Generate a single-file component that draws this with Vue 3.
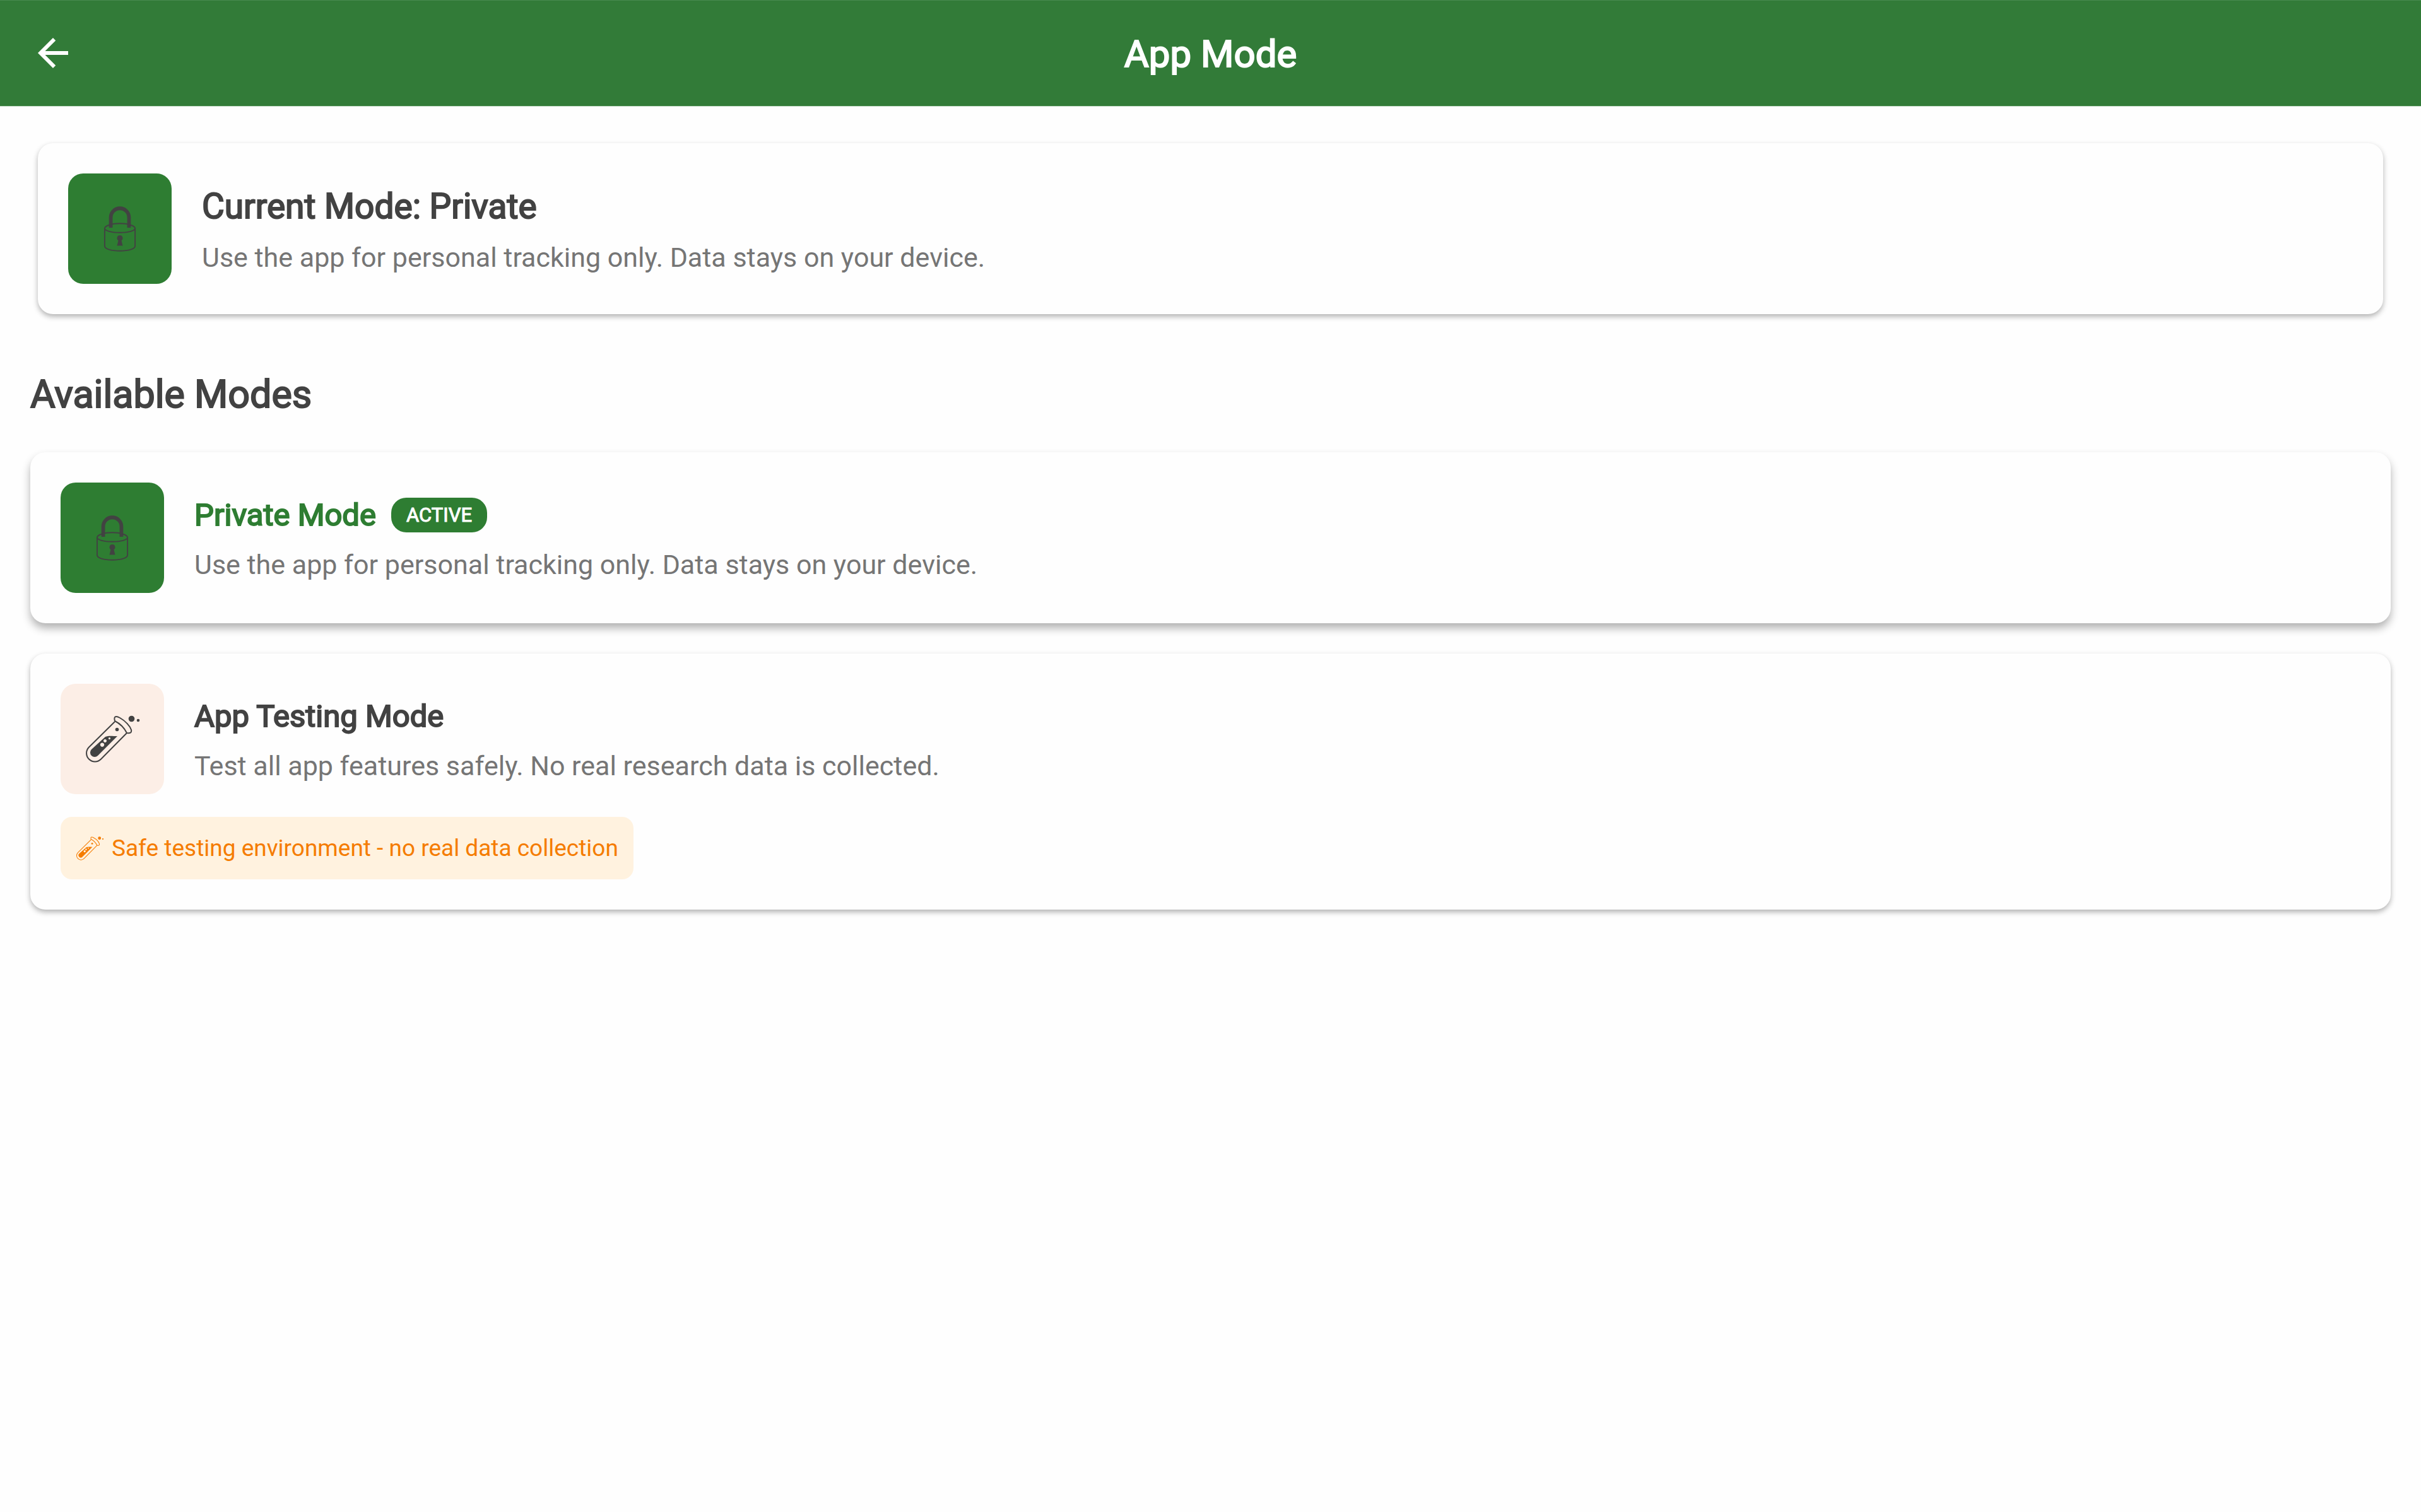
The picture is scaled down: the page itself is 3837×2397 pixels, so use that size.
<script setup>
const current = {
  title: 'Current Mode: Private',
  text: 'Use the app for personal tracking only. Data stays on your device.',
}

const modes = [
  {
    id: 'private',
    name: 'Private Mode',
    text: 'Use the app for personal tracking only. Data stays on your device.',
    icon: 'lock',
    active: true,
  },
  {
    id: 'testing',
    name: 'App Testing Mode',
    text: 'Test all app features safely. No real research data is collected.',
    icon: 'tube',
    active: false,
    note: 'Safe testing environment - no real data collection',
  },
]
</script>

<template>
  <svg class="symbols" aria-hidden="true">
    <symbol id="lock" viewBox="0 0 54 76">
      <g fill="none" stroke="currentColor">
        <path stroke-width="6" d="M12 36V19a15 15 0 0 1 30 0V36" />
        <path stroke-width="2" d="M2 37c0-4 11-8 25-8s25 4 25 8c0 4-11 7-25 7S2 41 2 37zM2 37V66c0 5 11 8 25 8s25-3 25-8V37" />
      </g>
      <path fill="currentColor" d="M27 48.500a4.700 4.700 0 0 1 2.600 8.600L31.700 65.500h-9.400L24.400 57.100A4.700 4.700 0 0 1 27 48.500z" />
    </symbol>
    <symbol id="tube" viewBox="0 0 87 75">
      <g fill="none" stroke="currentColor" stroke-width="2" stroke-linejoin="round">
        <path d="M47 10L6 50.500a13.300 13.300 0 0 0 19 19L66 28" />
        <path d="M47 9C45 2 48 0 55 4C64 9 71 17 73 23C74 28 71 28.500 66 28C62 20 55 13 47 9z" />
      </g>
      <circle cx="73.500" cy="5.500" r="4.800" fill="currentColor" />
      <circle cx="84" cy="8" r="2.300" fill="currentColor" />
      <circle cx="50.500" cy="22.500" r="2.800" fill="currentColor" />
      <path fill="currentColor" fill-rule="evenodd" d="M32 34C37 32 43 33 51 33L20 64a7 7 0 0 1-10-10zM27 43.500a3.200 3.200 0 1 0 .01 0zM31.500 38a2.500 2.500 0 1 0 .01 0zM38.500 35a1.600 1.600 0 1 0 .01 0z" />
    </symbol>
  </svg>

  <header class="bar">
    <button class="back" type="button" aria-label="Back">
      <svg viewBox="0 0 24 24" aria-hidden="true">
        <path fill="currentColor" d="M20 11H7.830l5.590-5.590L12 4l-8 8 8 8 1.410-1.410L7.830 13H20v-2z" />
      </svg>
    </button>
    <h1 class="bar-title strong">App Mode</h1>
  </header>

  <main class="page">
    <section class="card current">
      <div class="row">
        <span class="tile"><svg class="lock"><use href="#lock" /></svg></span>
        <div class="copy">
          <h2 class="current-title strong">{{ current.title }}</h2>
          <p class="text">{{ current.text }}</p>
        </div>
      </div>
    </section>

    <h2 class="heading strong">Available Modes</h2>

    <div class="modes">
      <button
        v-for="mode in modes"
        :key="mode.id"
        type="button"
        class="card mode"
        :class="{ active: mode.active }"
        :aria-pressed="mode.active"
      >
        <span class="row">
          <span class="tile" :class="{ pale: !mode.active }">
            <svg :class="mode.icon"><use :href="'#' + mode.icon" /></svg>
          </span>
          <span class="copy">
            <span class="name-row">
              <span class="name strong">{{ mode.name }}</span>
              <span v-if="mode.active" class="badge">ACTIVE</span>
            </span>
            <span class="text">{{ mode.text }}</span>
          </span>
        </span>
        <span v-if="mode.note" class="note">
          <svg class="note-icon"><use href="#tube" /></svg>
          <span>{{ mode.note }}</span>
        </span>
      </button>
    </div>
  </main>
</template>

<style>
body {
  margin: 0;
  background: #fefefe;
}
</style>

<style scoped>
.symbols {
  position: absolute;
  width: 0;
  height: 0;
}

.bar,
.page,
.card {
  font-family: Roboto, "Liberation Sans", sans-serif;
  font-weight: 400;
  color: #424242;
}

h1,
h2,
p {
  margin: 0;
  font-weight: 400;
}

.strong {
  -webkit-text-stroke: 2px currentColor;
}

.bar {
  display: grid;
  grid-template-columns: 72px 1fr 72px;
  align-items: center;
  padding: 48px;
  background: #327b38;
  border-bottom: 1px solid #c4dbc6;
  box-shadow: inset 0 1px #478a4e;
}

.back {
  display: block;
  width: 72px;
  height: 72px;
  padding: 0;
  border: 0;
  background: none;
  color: #fff;
  cursor: pointer;
}

.back svg {
  display: block;
  width: 72px;
  height: 72px;
}

.bar-title {
  padding-top: 4px;
  font-size: 60px;
  line-height: 68px;
  text-align: center;
  color: #fff;
}

.page {
  padding: 58px 48px 48px;
}

.card {
  padding: 48px;
  border: 0;
  border-radius: 24px;
  background: #fefefe;
  box-shadow: 0 4px 8px rgba(0, 0, 0, 0.3);
}

.current {
  margin: 0 12px;
}

.row {
  display: flex;
  align-items: center;
  gap: 48px;
}

.tile {
  display: flex;
  flex: none;
  align-items: center;
  justify-content: center;
  width: 164px;
  height: 175px;
  border-radius: 24px;
  background: #2e7d32;
  color: #424242;
}

.tile.pale {
  background: #fceee6;
}

.lock {
  width: 52px;
  height: 74px;
}

.tube {
  width: 87px;
  height: 75px;
}

.copy {
  display: flex;
  flex-direction: column;
  gap: 12px;
}

.current-title {
  font-size: 55px;
  line-height: 78px;
}

.text {
  font-size: 43px;
  line-height: 60px;
  color: #757575;
}

.heading {
  margin: 84px 0 48px;
  font-size: 61px;
  line-height: 87px;
}

.modes {
  display: flex;
  flex-direction: column;
  gap: 48px;
}

.mode {
  display: flex;
  flex-direction: column;
  align-items: flex-start;
  gap: 36px;
  text-align: left;
  cursor: pointer;
}

.mode.active {
  box-shadow: 0 8px 14px rgba(0, 0, 0, 0.3);
}

.name-row {
  display: flex;
  align-items: center;
  gap: 24px;
  height: 72px;
}

.name {
  font-size: 49px;
  line-height: 72px;
}

.active .name {
  color: #2e7d32;
}

.badge {
  padding: 6px 24px;
  border-radius: 24px;
  background: #2e7d32;
  color: #fff;
  font-size: 31px;
  line-height: 43px;
  -webkit-text-stroke: 1px currentColor;
}

.note {
  display: flex;
  align-items: center;
  gap: 12px;
  padding: 24px;
  border-radius: 18px;
  background: #fff2df;
  color: #f57c00;
  font-size: 37px;
  line-height: 51px;
}

.note-icon {
  width: 45px;
  height: 38px;
}
</style>
